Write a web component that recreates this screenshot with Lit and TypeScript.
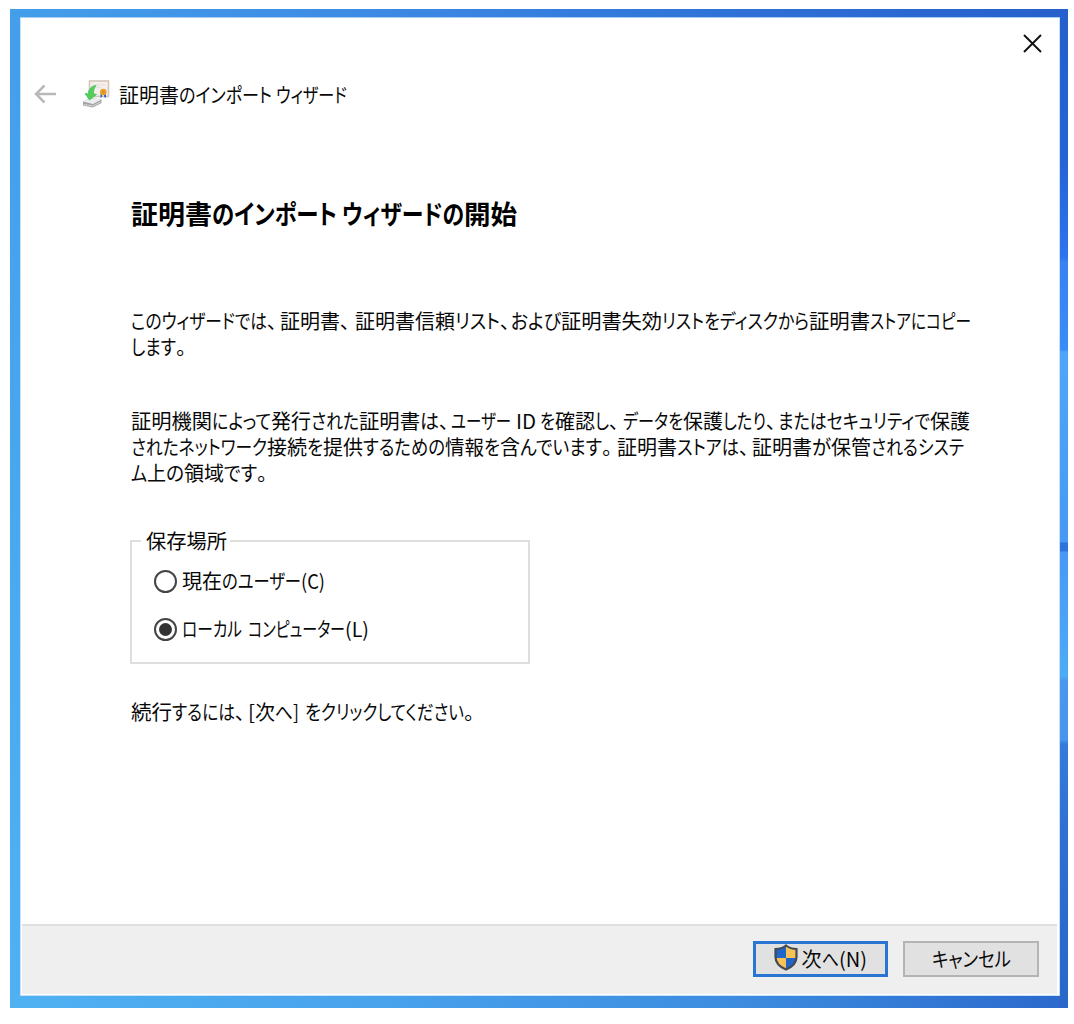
import { LitElement, html, svg, css } from "lit";
import { customElement, property } from "lit/decorators.js";
import { styleMap } from "lit/directives/style-map.js";

/** A piece of a line: its text and the advance width it occupies. */
type Run = [text: string, width: number];

const TITLE: Run[] = [["証明書", 60], ["のインポート", 93], [" ", 4], ["ウィザード", 71]];
const HEADING: Run[] = [["証明書", 81], ["のインポート", 125], [" ", 5], ["ウィザードの", 122], ["開始", 53]];
const INTRO: Run[][] = [
  [["このウィザードでは", 136], ["、", 13], ["証明書", 60], ["、", 15], ["証明書信頼", 100], ["リスト", 45], ["、", 11], ["および", 50], ["証明書失効", 101], ["リストをディスクから", 147], ["証明書", 61], ["ストアにコピー", 101]],
  [["します", 45], ["。", 14]],
];
const DETAIL: Run[][] = [
  [["証明機関", 81], ["によって", 59], ["発行", 40], ["された", 48], ["証明書", 61], ["は", 19], ["、", 12], ["ユーザー", 60], [" ", 5], ["ID", 20], [" ", 4], ["を", 15], ["確認", 40], ["し", 14], ["、", 14], ["データを", 60], ["保護", 40], ["したり", 43], ["、", 12], ["またはセキュリティで", 152], ["保護", 40]],
  [["されたネットワーク", 136], ["接続", 40], ["を", 16], ["提供", 40], ["するための", 82], ["情報", 39], ["を", 16], ["含", 20], ["んでいます", 82], ["。", 15], ["証明書", 60], ["ストアは", 62], ["、", 13], ["証明書", 60], ["が", 19], ["保管", 40], ["されるシステ", 93]],
  [["ム", 16], ["上", 19], ["の", 18], ["領域", 40], ["です", 33], ["。", 14]],
];
const HINT: Run[] = [["続行", 41], ["するには", 63], ["、", 13], ["[", 7], ["次", 20], ["へ", 18], ["]", 6], [" ", 6], ["を", 16], ["クリックしてください", 143], ["。", 14]];
const STORES: { label: Run[]; checked: boolean }[] = [
  { label: [["現在", 40], ["のユーザー", 79], ["(C)", 24]], checked: false },
  { label: [["ローカル", 60], [" ", 6], ["コンピューター", 97], ["(L)", 24]], checked: true },
];

/** One line of text whose kana are condensed to their run widths. */
@customElement("text-line")
class TextLine extends LitElement {
  @property({ attribute: false }) runs: Run[] = [];

  static styles = css`
    :host { display: flex; white-space: pre; }
    .run { flex: none; display: block; overflow: visible; }
    .ink {
      display: inline-block;
      transform-origin: 0 50%;
      font-feature-settings: "palt";
      vertical-align: top;
    }
  `;

  updated() {
    const inks = this.renderRoot.querySelectorAll<HTMLElement>(".ink");
    inks.forEach((ink, i) => {
      const [text, width] = this.runs[i];
      if (/^[、。\s]+$/.test(text)) return;
      ink.style.transform = "none";
      const natural = ink.getBoundingClientRect().width;
      if (natural > 0) ink.style.transform = `scaleX(${width / natural})`;
    });
  }

  render() {
    return html`${this.runs.map(([text, width]) =>
      html`<span class="run" style=${styleMap({ width: `${width}px` })}><span class="ink">${text}</span></span>`)}`;
  }
}

const backIcon = svg`<path d="M22 10H2M10.500 1.500L2 10l8.500 8.500" fill="none" stroke="#b9b9b9" stroke-width="2.500"/>`;
const closeIcon = svg`<path d="M1 1L18 18M18 1L1 18" fill="none" stroke="#111" stroke-width="1.900"/>`;
const certIcon = svg`
  <rect x="7.500" y="1" width="19" height="15.500" fill="#f4efea" stroke="#d5c6ba" stroke-width="1.600"/>
  <path d="M11 5h12M11 7.500h8" stroke="#e6e1de"/>
  <path d="M18.500 13v5l1.700-1.200V13zM22 13v3.800l2 1.200v-5z" fill="#2f67c9"/>
  <circle cx="21.300" cy="12" r="3.300" fill="#e9a02c"/><circle cx="21.300" cy="12" r="1.200" fill="#d88d20"/>
  <path d="M1 21.500l7-3.500 11.500 1.500v3.500L11 27.500 1 25.500z" fill="#a2a4a6"/>
  <path d="M1 21.500l7-3.500 11.500 1.500-8.500 4.500z" fill="#eceeee"/>
  <path d="M2 24.500l9 1.500 7.500-4" fill="none" stroke="#d4d6d7" stroke-width="1"/>
  <path d="M14 5.500c-5 .5-7.500 4-7.800 8.500L3 13.500 7.500 20l7-5.500-3-.7c0-3.200.3-5.200 2.500-8.300z" fill="#52cf57" stroke="#4cb855" stroke-width=".7"/>`;
const shieldIcon = svg`
  <clipPath id="shield"><path d="M12 1.500c3 2.300 6.300 3.400 10.500 3.500v8c0 6-4.500 10-10.500 12.500C6 23 1.500 19 1.500 13V5C5.700 4.900 9 3.800 12 1.500z"/></clipPath>
  <g clip-path="url(#shield)">
    <path d="M0 0h12v14H0zM12 14h12v13H12z" fill="#2065c8"/>
    <path d="M12 0h12v14H12zM0 14h12v13H0z" fill="#f9c256"/>
  </g>
  <path d="M12 1.500c3 2.300 6.300 3.400 10.500 3.500v8c0 6-4.500 10-10.500 12.500C6 23 1.500 19 1.500 13V5C5.700 4.900 9 3.800 12 1.500z" fill="none" stroke="#444b52" stroke-width="2.200"/>`;

@customElement("app-root")
class AppRoot extends LitElement {
  static styles = css`
    :host {
      display: block;
      box-sizing: border-box;
      width: 1074px;
      height: 1024px;
      padding: 9px 6px 16px 10px;
      background: #fff;
      color: #080808;
      font: 20px/26px "Noto Sans CJK JP", sans-serif;
    }
    svg { display: block; flex: none; }
    .desktop {
      box-sizing: border-box;
      width: 1058px;
      height: 999px;
      padding: 8px 8px 12px 10px;
      background:
        linear-gradient(#2560cb 0, #2563d5 150px, #2d74ef 249px, #3882f2 252px, #3a8cf6 341px, #4fa6f7 343px,
          #4799f3 533px, #2e73dc 534px, #2e73dc 542px, #4899f5 543px, #4cabf5 667px, #4a98ec 672px,
          #4795ec 731px, #357bdc 735px, #2f70d2 830px, #2966c9 100%) right 0 top 0 / 9px 100% no-repeat,
        linear-gradient(90deg, #449eea, #3c8ae4 35%, #2e70d6 70%, #2660cb) 0 0 / 100% 9px no-repeat,
        linear-gradient(90deg, #4fb1f2, #48a2ec 35%, #3c8bdf 70%, #2b69cc) 0 100% / 100% 13px no-repeat,
        linear-gradient(#449eea, #4fb1f3);
    }
    .window {
      box-sizing: border-box;
      display: flex;
      flex-direction: column;
      height: 979px;
      padding: 0 2px 1px 1px;
      border: 1px solid #c3e2f8;
      border-top-color: #a8cdf2;
      background: #fff;
    }
    .caption { display: flex; justify-content: flex-end; padding: 16px 15px 0 0; }
    .header { display: flex; align-items: center; height: 30px; margin-top: 26px; padding-left: 12px; }
    .header .cert { margin-left: 25px; }
    .header text-line { margin: 1px 0 0 9px; }
    .content { flex: 1; padding: 87px 0 0 109px; }
    .heading { font-size: 26.5px; line-height: 34px; font-weight: 700; color: #000; }
    .intro { margin-top: 78px; }
    .detail { margin-top: 48px; }
    .group {
      box-sizing: border-box;
      width: 400px;
      height: 136px;
      margin: 42px 0 0 -1px;
      padding: 14px 0 0 22px;
      border: 2px solid #dedede;
    }
    .legend { margin-left: -13px; padding: 0 3px 0 5px; }
    .option { display: flex; align-items: center; gap: 5px; height: 26px; margin-bottom: 22px; }
    .radio {
      box-sizing: border-box;
      display: grid;
      place-items: center;
      width: 23px;
      height: 23px;
      border: 2px solid #444;
      border-radius: 50%;
    }
    .dot { width: 13px; height: 13px; border-radius: 50%; background: #333; }
    .hint { margin-top: 35px; }
    .footer {
      box-sizing: border-box;
      display: flex;
      justify-content: flex-end;
      gap: 15px;
      height: 70px;
      padding: 15px 18px 0 0;
      border-top: 2px solid #e0e0e0;
      background: #efefef;
    }
    .button {
      box-sizing: border-box;
      display: flex;
      align-items: center;
      justify-content: center;
      gap: 4px;
      width: 136px;
      height: 36px;
      padding: 0;
      border: 2px solid #b4b4b4;
      background: #e1e1e1;
      color: #080808;
      font: inherit;
    }
    .primary { width: 135px; border: 3px solid #2a74d2; padding-right: 1px; }
    .primary svg { margin-top: -3px; }
  `;

  render() {
    return html`
      <div class="desktop"><div class="window">
        <div class="caption"><svg width="19" height="19" viewBox="0 0 19 19">${closeIcon}</svg></div>
        <div class="header">
          <svg width="23" height="20" viewBox="0 0 23 20">${backIcon}</svg>
          <svg class="cert" width="28" height="28" viewBox="0 0 28 28">${certIcon}</svg>
          <text-line .runs=${TITLE}></text-line>
        </div>
        <div class="content">
          <text-line class="heading" .runs=${HEADING}></text-line>
          <div class="intro">${INTRO.map((runs) => html`<text-line .runs=${runs}></text-line>`)}</div>
          <div class="detail">${DETAIL.map((runs) => html`<text-line .runs=${runs}></text-line>`)}</div>
          <fieldset class="group">
            <legend class="legend"><text-line .runs=${[["保存場所", 81]] as Run[]}></text-line></legend>
            ${STORES.map((s) => html`<div class="option">
              <span class="radio">${s.checked ? html`<span class="dot"></span>` : ""}</span>
              <text-line .runs=${s.label}></text-line>
            </div>`)}
          </fieldset>
          <text-line class="hint" .runs=${HINT}></text-line>
        </div>
        <div class="footer">
          <button class="button primary">
            <svg width="24" height="27" viewBox="0 0 24 27">${shieldIcon}</svg>
            <text-line .runs=${[["次", 20], ["へ", 17], ["(N)", 28]] as Run[]}></text-line>
          </button>
          <button class="button"><text-line .runs=${[["キャンセル", 79]] as Run[]}></text-line></button>
        </div>
      </div></div>`;
  }
}
